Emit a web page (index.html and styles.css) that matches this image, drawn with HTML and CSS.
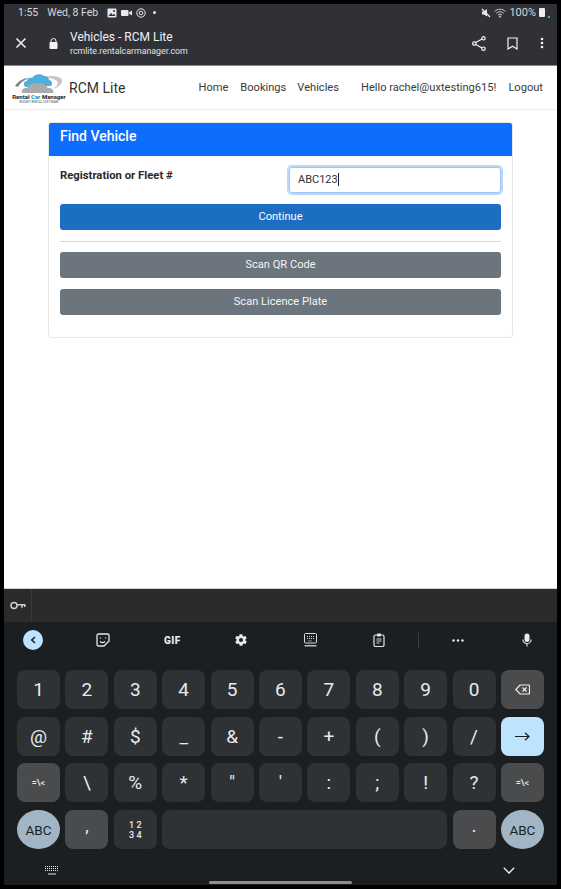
FILE: index.html
```html
<!DOCTYPE html>
<html lang="en">
<head>
    <meta charset="UTF-8">
    <meta name="viewport" content="width=device-width, initial-scale=1.0">
    <title>Vehicles - RCM Lite</title>
    <link rel="stylesheet" href="styles.css">
</head>
<body>
<div class="screen">
    <div class="chrome">
        <div class="status-bar">
            <span class="time">1:55</span>
            <span class="date">Wed, 8 Feb</span>
            <svg class="st-icon" width="10" height="10" viewBox="0 0 10 10"><rect x="0.5" y="0.5" width="9" height="9" rx="1" fill="#e8e8e8"/><path d="M1.5 8l2.5-3 1.8 2 1.2-1.2L8.5 8z" fill="#303136"/><circle cx="7" cy="3" r="1" fill="#303136"/></svg>
            <svg class="st-icon" width="11" height="8" viewBox="0 0 11 8"><rect x="0" y="1" width="7.5" height="6" rx="1" fill="#e8e8e8"/><path d="M8 3.5L11 1.5v5L8 4.5z" fill="#e8e8e8"/></svg>
            <svg class="st-icon" width="10" height="10" viewBox="0 0 10 10" fill="none" stroke="#e8e8e8"><circle cx="5" cy="5" r="4.2"/><circle cx="5" cy="5" r="1.8"/></svg>
            <span class="st-dot"></span>
            <span class="st-right">
                <svg width="10" height="10" viewBox="0 0 10 10"><path d="M1 3.5h2L6 1v7.5L3 6.5H1z" fill="#e8e8e8"/><path d="M1 1l8 8" stroke="#e8e8e8" stroke-width="1.2"/></svg>
                <svg width="12" height="10" viewBox="0 0 12 10" fill="none" stroke="#c8c8c8" stroke-width="1"><path d="M0.5 3.5c3-3 8-3 11 0M2.300 5.300c2-2 5.400-2 7.400 0M4 7c1-1 3-1 4 0"/><circle cx="6" cy="8.600" r="0.700" fill="#c8c8c8"/></svg>
                <span class="battery-text">100%</span>
                <span class="battery"></span>
                <span class="green-dot"></span>
            </span>
        </div>
        <div class="toolbar">
            <svg class="close-icon" width="12" height="12" viewBox="0 0 12 12" fill="none" stroke="#f2f2f2" stroke-width="1.500"><path d="M1.500 1.500l9 9M10.500 1.500l-9 9"/></svg>
            <svg class="lock-icon" width="9" height="11" viewBox="0 0 9 11"><path d="M2 4.500V3a2.500 2.500 0 0 1 5 0v1.500" fill="none" stroke="#f2f2f2"/><rect x="0.500" y="4" width="8" height="7" rx="1" fill="#f2f2f2"/></svg>
            <div class="page-title">
                <div class="title-main">Vehicles - RCM Lite</div>
                <div class="title-url">rcmlite.rentalcarmanager.com</div>
            </div>
            <svg class="tool-share" width="14" height="15" viewBox="0 0 14 15" fill="none" stroke="#f2f2f2" stroke-width="1.200"><circle cx="2.300" cy="7.500" r="1.700"/><circle cx="11.500" cy="2.300" r="1.700"/><circle cx="11.500" cy="12.700" r="1.700"/><path d="M3.800 6.600l6.200-3.500M3.800 8.400l6.200 3.500"/></svg>
            <svg class="tool-mark" width="11" height="13" viewBox="0 0 11 13" fill="none" stroke="#f2f2f2" stroke-width="1.200"><path d="M1 1h9v11L5.500 9.300 1 12z"/></svg>
            <svg class="tool-more" width="4" height="12" viewBox="0 0 4 12" fill="#f2f2f2"><circle cx="2" cy="2" r="1.300"/><circle cx="2" cy="6" r="1.300"/><circle cx="2" cy="10" r="1.300"/></svg>
        </div>
    </div>

    <div class="page">
        <nav class="navbar">
            <div class="logo">
                <svg width="48" height="22" viewBox="0 0 48 22">
                    <path d="M30 5c7-2 15-1 17 3 1 3-3 7-9 9 4-3 6-6 4-8-2-2-7-3-12-4z" fill="#c4c6c8"/>
                    <path d="M0 14C3 9 8 6 14 6 9 8 5 11 3 15z" fill="#85888b"/>
                    <path d="M11 15c-3-1-3-6 1-6 0-3 3-4 5-3 2-4 9-5 12-2 3 0 5 1 5 4 3 0 4 4 2 6z" fill="#4fb0da"/>
                    <path d="M7 21c-1-3 1-5 5-5l4-4c3-1 10-1 13 0l4 4c4 0 6 2 5 5z" fill="#a9abad"/>
                </svg>
                <span class="logo-text">Rental <b>Car</b> Manager</span>
                <span class="logo-sub">BUDGET RENTAL SOFTWARE</span>
            </div>
            <span class="brand">RCM Lite</span>
            <div class="nav-links">
                <a class="nav-link link-home">Home</a>
                <a class="nav-link">Bookings</a>
                <a class="nav-link link-veh">Vehicles</a>
                <span class="nav-link link-hello">Hello rachel@uxtesting615!</span>
                <a class="nav-link">Logout</a>
            </div>
        </nav>

        <div class="card">
            <div class="card-header">Find Vehicle</div>
            <div class="card-body">
                <div class="form-row">
                    <label class="form-label">Registration or Fleet #</label>
                    <div class="fake-input">ABC123<span class="caret"></span></div>
                </div>
                <div class="btn btn-primary">Continue</div>
                <div class="divider"></div>
                <div class="btn btn-grey">Scan QR Code</div>
                <div class="btn btn-grey">Scan Licence Plate</div>
            </div>
        </div>
    </div>

    <div class="accessory">
        <div class="key-cell">
            <svg width="16" height="9" viewBox="0 0 16 9" fill="none" stroke="#d0d0d0" stroke-width="1.500"><circle cx="4" cy="4.500" r="3"/><path d="M7 3.800h8.500M12 3.800v3M14.800 3.800v2.200"/></svg>
        </div>
    </div>

    <div class="keyboard">
        <div class="kb-tools">
            <span class="kb-back"><svg width="6" height="8" viewBox="0 0 6 8" fill="none" stroke="#1b1f22" stroke-width="1.600"><path d="M5 1L1.800 4 5 7"/></svg></span>
            <svg class="t-sticker" width="14" height="14" viewBox="0 0 14 14" fill="none" stroke="#e4e6e8" stroke-width="1.300"><path d="M2.500 1h9A1.500 1.500 0 0 1 13 2.500V8l-5 5H2.500A1.500 1.500 0 0 1 1 11.500v-9A1.500 1.500 0 0 1 2.500 1z"/><path d="M4 8.500c1.500 1.300 3.500 1.300 5 0M4.500 4.500v1M9.500 4.500v1"/></svg>
            <span class="t-gif">GIF</span>
            <svg class="t-gear" width="14" height="14" viewBox="0 0 24 24" fill="#e8eaed"><path d="M19.400 13c.1-.3.100-.7.100-1s0-.7-.1-1l2.100-1.600c.2-.2.200-.4.100-.6l-2-3.500c-.1-.2-.4-.3-.6-.2l-2.500 1c-.5-.4-1.100-.7-1.700-1l-.4-2.600c0-.3-.2-.5-.5-.5h-4c-.3 0-.5.200-.5.500l-.4 2.600c-.6.300-1.200.6-1.700 1l-2.500-1c-.2-.1-.5 0-.6.200l-2 3.500c-.1.200-.1.400.1.600L4.600 11c-.1.300-.1.700-.1 1s0 .7.100 1l-2.100 1.600c-.2.200-.2.400-.1.600l2 3.500c.1.200.4.300.6.200l2.500-1c.5.400 1.100.7 1.700 1l.4 2.600c0 .3.200.5.500.5h4c.3 0 .5-.2.500-.5l.4-2.600c.6-.3 1.200-.6 1.700-1l2.500 1c.2.100.5 0 .6-.2l2-3.500c.1-.2.100-.4-.1-.6zM12 15.500a3.500 3.500 0 1 1 0-7 3.500 3.500 0 0 1 0 7z"/></svg>
            <svg class="t-kb" width="13" height="14" viewBox="0 0 13 14"><rect x="0.500" y="0.500" width="12" height="9.500" rx="1" fill="none" stroke="#d8dadc"/><path d="M3 3.500h7M3 5.500h7M4.500 7.800h4" stroke="#d8dadc" stroke-dasharray="1 1"/><path d="M0.500 12.800h12" stroke="#e4e6e8" stroke-width="1.200"/></svg>
            <svg class="t-clip" width="12" height="14" viewBox="0 0 12 14"><rect x="1" y="2" width="10" height="11.500" rx="1.500" fill="none" stroke="#e4e6e8" stroke-width="1.200"/><rect x="4" y="0.500" width="4" height="3" rx="0.800" fill="#e4e6e8"/><path d="M3.500 6h5M3.500 8h5M3.500 10h3" stroke="#cfd1d3"/></svg>
            <span class="t-sep"></span>
            <svg class="t-more" width="12" height="3" viewBox="0 0 12 3" fill="#e8eaed"><circle cx="1.500" cy="1.500" r="1.200"/><circle cx="6" cy="1.500" r="1.200"/><circle cx="10.500" cy="1.500" r="1.200"/></svg>
            <svg class="t-mic" width="10" height="14" viewBox="0 0 10 14"><rect x="2.500" y="0.500" width="5" height="8.500" rx="2.500" fill="#e8eaed"/><path d="M0.800 6.500a4.200 4.200 0 0 0 8.400 0M5 10.700V13.500" fill="none" stroke="#e8eaed" stroke-width="1.100"/></svg>
        </div>
        <div class="keys">
            <div class="key">1</div><div class="key">2</div><div class="key">3</div><div class="key">4</div><div class="key">5</div><div class="key">6</div><div class="key">7</div><div class="key">8</div><div class="key">9</div><div class="key">0</div>
            <div class="key key-dark"><svg width="15" height="11" viewBox="0 0 15 11" fill="none" stroke="#eceef0" stroke-width="1.200"><path d="M5 1h8.500a1 1 0 0 1 1 1v7a1 1 0 0 1-1 1H5L.8 5.500z"/><path d="M7.500 3.500l4 4M11.500 3.500l-4 4"/></svg></div>

            <div class="key">@</div><div class="key">#</div><div class="key">$</div><div class="key">_</div><div class="key">&amp;</div><div class="key">-</div><div class="key">+</div><div class="key">(</div><div class="key">)</div><div class="key">/</div>
            <div class="key key-enter"><svg width="15" height="9" viewBox="0 0 15 9" fill="none" stroke="#1b1f22" stroke-width="1.200"><path d="M0 4.500h14M10 .8l4 3.700-4 3.700"/></svg></div>

            <div class="key key-dark key-small">=\&lt;</div><div class="key">\</div><div class="key">%</div><div class="key">*</div><div class="key">"</div><div class="key">'</div><div class="key">:</div><div class="key">;</div><div class="key">!</div><div class="key">?</div>
            <div class="key key-dark key-small">=\&lt;</div>

            <div class="key key-abc">ABC</div>
            <div class="key key-dark key-mark">,</div>
            <div class="key key-nums">1 2<br>3 4</div>
            <div class="key key-space"></div>
            <div class="key key-dark key-mark">.</div>
            <div class="key key-abc">ABC</div>
        </div>
        <div class="kb-bottom">
            <svg class="kb-switch" width="14" height="9" viewBox="0 0 14 9" fill="none" stroke="#e4e6e8"><path d="M0 0.500h14M0 2.500h14M0 4.500h14" stroke-dasharray="1 1"/><path d="M3 8h8"/></svg>
            <span class="home-bar"></span>
            <svg class="kb-hide" width="12" height="7" viewBox="0 0 12 7" fill="none" stroke="#f2f2f2" stroke-width="1.300"><path d="M.8 .8L6 6l5.200-5.200"/></svg>
        </div>
    </div>
</div>
</body>
</html>
```

FILE: styles.css
```css
* {
    box-sizing: border-box;
}

body {
    margin: 0;
    background: #000;
    font-family: Roboto, Arial, sans-serif;
    padding: 4px;
    height: 889px;
    overflow: hidden;
}

.screen {
    width: 553px;
    height: 881px;
    display: flex;
    flex-direction: column;
}

/* browser chrome */
.chrome {
    height: 61px;
    background: #303136;
    color: #f0f0f0;
}

.status-bar {
    height: 17px;
    display: flex;
    align-items: center;
    padding-left: 14px;
    font-size: 10.5px;
    color: #d8d8d8;
}

.time {
    margin-right: 9px;
}

.date {
    margin-right: 9px;
}

.st-icon {
    margin-right: 4px;
}

.st-dot {
    width: 3px;
    height: 3px;
    border-radius: 50%;
    background: #e8e8e8;
    margin-left: 3px;
}

.st-right {
    margin-left: auto;
    display: flex;
    align-items: center;
    gap: 3px;
    padding-right: 7px;
}

.battery-text {
    font-size: 11px;
}

.battery {
    width: 6px;
    height: 9px;
    background: #eee;
    border-radius: 1px;
}

.green-dot {
    width: 2px;
    height: 2px;
    background: #2ecc40;
    margin-top: 8px;
}

.toolbar {
    height: 44px;
    display: flex;
    align-items: center;
    padding-left: 11px;
}

.close-icon {
    margin-right: 22px;
}

.lock-icon {
    margin-right: 12px;
}

.page-title {
    flex: 1;
    padding-top: 1px;
}

.title-main {
    font-size: 12px;
    line-height: 15px;
}

.title-url {
    font-size: 8.8px;
    line-height: 12px;
    color: #e2e2e2;
}

.tool-share {
    margin-right: 21px;
}

.tool-mark {
    margin-right: 22px;
}

.tool-more {
    margin-right: 13px;
}

/* page */
.page {
    height: 524px;
    background: #fff;
    border-top: 1px solid #8a8a8a;
    border-bottom: 1px solid #d0d0d0;
}

.navbar {
    height: 44px;
    display: flex;
    align-items: center;
    border-bottom: 1px solid #eeeeee;
    color: #333;
    padding-right: 14px;
    white-space: nowrap;
}

.logo {
    width: 54px;
    margin: 0 3px 0 8px;
    display: flex;
    flex-direction: column;
    align-items: center;
}

.logo svg {
    display: block;
}

.logo-text {
    font-size: 6px;
    line-height: 6px;
    font-weight: 700;
    color: #222;
}

.logo-text b {
    color: #2a9ac9;
}

.logo-sub {
    font-size: 3px;
    line-height: 4px;
    color: #555;
}

.brand {
    font-size: 14px;
}

.nav-links {
    margin-left: auto;
    display: flex;
    gap: 11px;
}

.nav-link {
    font-size: 11.1px;
    color: #3a3a3a;
}

.link-home {
    margin-right: 1px;
}

.link-veh {
    margin-right: 11px;
}

.link-hello {
    margin-right: 1px;
}

/* find vehicle card */
.card {
    width: 465px;
    height: 216px;
    margin: 12px 0 0 44px;
    border: 1px solid #e6e6e6;
    border-radius: 3px;
    overflow: hidden;
}

.card-header {
    height: 33px;
    background: #0d6efd;
    color: #fff;
    font-size: 14px;
    font-weight: 500;
    padding: 5px 11px;
}

.card-body {
    padding: 11px 11px;
}

.form-row {
    display: flex;
    justify-content: space-between;
    margin-bottom: 11px;
}

.form-label {
    font-size: 11.3px;
    font-weight: 700;
    color: #2a2a2a;
    margin-top: 2px;
}

.fake-input {
    width: 212px;
    height: 26px;
    border: 1px solid #9cc4fd;
    border-radius: 3px;
    box-shadow: 0 0 0 2px #bcd7fd;
    font-size: 11px;
    color: #333;
    padding: 0 0 1px 8px;
    display: flex;
    align-items: center;
}

.caret {
    width: 1px;
    height: 13px;
    background: #222;
}

.btn {
    height: 26px;
    border-radius: 3px;
    color: #fff;
    font-size: 11.1px;
    padding-bottom: 1px;
    display: flex;
    align-items: center;
    justify-content: center;
}

.btn-primary {
    background: #1b6ec2;
}

.btn-grey {
    background: #6c757d;
    margin-bottom: 11px;
    color: #f4f4f4;
}

.divider {
    height: 1px;
    background: #d8d8d8;
    margin: 11px 0 10px;
}

/* keyboard */
.accessory {
    height: 33px;
    background: #2b2b2b;
}

.key-cell {
    width: 28px;
    height: 33px;
    display: flex;
    align-items: center;
    justify-content: center;
    border-right: 1px solid #3a3a3a;
}

.keyboard {
    flex: 1;
    background: #1b1f22;
    display: flex;
    flex-direction: column;
    padding: 0 13px;
    color: #e8eaed;
}

.kb-tools {
    height: 48px;
    padding-bottom: 12px;
    display: flex;
    align-items: center;
}

.kb-back {
    width: 20px;
    height: 20px;
    border-radius: 50%;
    background: #bde3fd;
    display: flex;
    align-items: center;
    justify-content: center;
    margin-left: 6px;
    margin-right: 53px;
}

.t-sticker {
    margin-right: 54px;
}

.t-gif {
    font-size: 10px;
    font-weight: 900;
    letter-spacing: 0.5px;
    width: 17px;
    margin-right: 53px;
}

.t-gear {
    margin-right: 56px;
}

.t-kb {
    margin-right: 56px;
}

.t-clip {
    margin-right: 33px;
}

.t-sep {
    width: 1px;
    height: 15px;
    background: #3a3e41;
    margin-right: 33px;
}

.t-more {
    margin-right: 58px;
}

.keys {
    display: grid;
    grid-template-columns: repeat(11, 43px);
    grid-auto-rows: 39px;
    column-gap: 5.4px;
    row-gap: 7.7px;
}

.key {
    background: #2e3235;
    border-radius: 8px;
    display: flex;
    align-items: center;
    justify-content: center;
    font-size: 19px;
    font-weight: 400;
}

.key-dark {
    background: #494b4d;
}

.key-small {
    font-size: 9px;
    font-weight: 500;
}

.key-mark {
    font-size: 14px;
    font-weight: 700;
    padding-bottom: 6px;
}

.key-enter {
    background: #bde3fd;
}

.key-abc {
    background: #a1b5c4;
    color: #1b1f22;
    font-size: 13.5px;
    font-weight: 400;
    border-radius: 50%;
}

.key-nums {
    font-size: 9px;
    font-weight: 500;
    line-height: 10px;
    text-align: center;
}

.key-space {
    grid-column: span 6;
}

.kb-bottom {
    flex: 1;
    position: relative;
    display: flex;
    align-items: center;
    justify-content: space-between;
    padding: 7px 29px 0 28px;
}

.home-bar {
    position: absolute;
    left: 192px;
    bottom: 1px;
    width: 143px;
    height: 3px;
    border-radius: 2px;
    background: #8e8e8e;
}
```
